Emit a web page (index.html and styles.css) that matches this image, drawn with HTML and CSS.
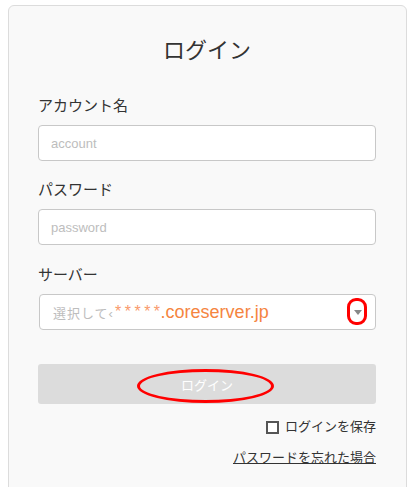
FILE: index.html
```
<!DOCTYPE html>
<html lang="ja">

<head>
    <meta charset="UTF-8">
    <meta name="viewport" content="width=device-width, initial-scale=1.0">
    <title>ログイン</title>
    <link rel="stylesheet" href="styles.css">
</head>

<body>
    <div class="card">
        <h1 class="title">ログイン</h1>

        <label class="label" for="account">アカウント名</label>
        <input class="field" id="account" type="text" placeholder="account">

        <label class="label" for="password">パスワード</label>
        <input class="field" id="password" type="password" placeholder="password">

        <label class="label">サーバー</label>
        <div class="select">
            <span class="select-text">選択して‹</span><span class="stars">*****</span><span class="domain">.coreserver.jp</span>
            <span class="arrow"></span>
            <span class="mark mark-arrow"></span>
        </div>

        <div class="button">
            <span>ログイン</span>
            <span class="mark mark-button"></span>
        </div>

        <div class="remember">
            <span class="check"></span>
            <span>ログインを保存</span>
        </div>

        <div class="forgot">
            <a href="#">パスワードを忘れた場合</a>
        </div>
    </div>
</body>

</html>
```
FILE: styles.css
```
* {
    margin: 0;
    padding: 0;
    box-sizing: border-box;
}

body,
html {
    height: 100%;
    overflow: hidden;
    background: #fff;
    font-family: "Liberation Sans", "Noto Sans CJK JP", sans-serif;
    color: #333;
}

body {
    padding: 5px 8px 0 8px;
}

.card {
    display: flex;
    flex-direction: column;
    background: #f9f9f9;
    border: 1px solid #dcdcdc;
    border-radius: 6px;
    padding: 29px 30px 40px 29px;
    min-height: 500px;
}

.title {
    font-weight: normal;
    font-size: 22px;
    line-height: 32px;
    text-align: center;
    margin-bottom: 28px;
}

.label {
    font-size: 15px;
    line-height: 22px;
    margin-bottom: 8px;
}

.field {
    height: 36px;
    width: 100%;
    border: 1px solid #c8c8c8;
    border-radius: 4px;
    background: #fff;
    padding: 0 12px;
    font-family: inherit;
    font-size: 13px;
    color: #333;
    margin-bottom: 18px;
    outline: none;
}

.field::placeholder {
    color: #bdbdbd;
}

#password {
    margin-bottom: 19px;
}

.select {
    position: relative;
    display: flex;
    align-items: center;
    height: 36px;
    border: 1px solid #c8c8c8;
    border-radius: 4px;
    background: #fff;
    padding: 0 13px;
    margin-left: 1px;
}

.select-text {
    font-size: 13px;
    color: #bdbdbd;
    letter-spacing: 1px;
}

.stars {
    font-size: 16px;
    color: #f99a6c;
    letter-spacing: 3.5px;
    margin-left: 1px;
    margin-right: -3px;
}

.domain {
    font-size: 18px;
    color: #f5853f;
    margin-top: 1px;
}

.arrow {
    position: absolute;
    right: 13px;
    top: 15px;
    border-left: 4px solid transparent;
    border-right: 4px solid transparent;
    border-top: 5px solid #888;
}

.mark {
    position: absolute;
    border: 3px solid #f00;
    pointer-events: none;
}

.mark-arrow {
    right: 8px;
    top: 3px;
    width: 20px;
    height: 27px;
    border-radius: 9px;
}

.button {
    position: relative;
    display: flex;
    align-items: center;
    justify-content: center;
    height: 40px;
    margin-top: 34px;
    background: #dcdcdc;
    border-radius: 3px;
    color: #fff;
    font-size: 13px;
}

.mark-button {
    left: 99px;
    top: 5px;
    width: 137px;
    height: 34px;
    border-radius: 50%;
}

.remember {
    display: flex;
    justify-content: flex-end;
    align-items: center;
    gap: 6px;
    margin-top: 13px;
    font-size: 13px;
    line-height: 20px;
}

.check {
    width: 13px;
    height: 13px;
    border: 2px solid #555;
    background: #fff;
}

.forgot {
    display: flex;
    justify-content: flex-end;
    margin-top: 11px;
    font-size: 13px;
    line-height: 20px;
}

.forgot a {
    color: #333;
    text-decoration: underline;
}
```
